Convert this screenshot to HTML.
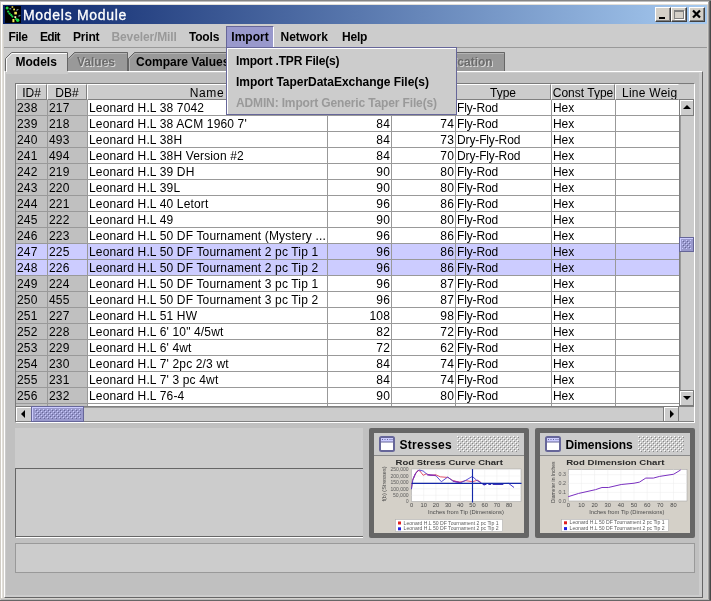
<!DOCTYPE html>
<html>
<head>
<meta charset="utf-8">
<title>Models Module</title>
<style>
html,body{margin:0;padding:0;}
body{width:711px;height:601px;overflow:hidden;background:#d4d2ce;position:relative;
 font-family:"Liberation Sans",sans-serif;font-size:12px;color:#000;}
div,span{position:absolute;box-sizing:border-box;white-space:nowrap;}
svg{position:absolute;overflow:visible;}
#root{left:0;top:0;width:711px;height:601px;will-change:transform;transform:translateZ(0);}
.b{font-weight:bold;}
/* window chrome */
#edge-top0{left:0;top:0;width:711px;height:1px;background:#858585;}
#edge-top1{left:0;top:1px;width:709px;height:1px;background:#bdbdbd;}
#edge-left{left:0;top:2px;width:1px;height:597px;background:#d0ccc4;}
#edge-white-t{left:1px;top:2px;width:707px;height:2px;background:#fff;}#edge-t4{left:2px;top:4px;width:706px;height:1px;background:#e2dfd8;}#edge-l2{left:2px;top:4px;width:1px;height:594px;background:#e2dfd8;}
#edge-white-l{left:1px;top:2px;width:1px;height:596px;background:#fff;}
#edge-r1{left:709px;top:1px;width:2px;height:600px;background:linear-gradient(to right,#6c6c6c 50%,#484848 50%);}
#edge-r0{left:708px;top:2px;width:1px;height:598px;background:#a4a4a4;}
#edge-b1{left:0;top:600px;width:711px;height:1px;background:#666666;}
#edge-b0{left:1px;top:599px;width:708px;height:1px;background:#b8b8b8;}
#title{left:3px;top:5px;width:704px;height:19px;background:linear-gradient(to right,#0a246a 0%,#a6caf0 100%);}
#title .txt{left:20px;top:2px;color:#fff;font-size:14px;line-height:16px;letter-spacing:0.7px;-webkit-text-stroke:0.3px #fff;}
.wb{top:2px;width:16px;height:15px;background:#d4d0c8;border:1px solid;border-color:#fff #404040 #404040 #fff;box-shadow:inset -1px -1px 0 #808080;}
#client{left:4px;top:24px;width:703px;height:574px;background:#cccccc;}
/* menu */
#menubar{left:4px;top:24px;width:703px;height:24px;background:#cccccc;border-bottom:1px solid #999;}
.mi{font-weight:bold;font-size:12px;line-height:14px;}
.dis{color:#999;}
#msel{left:226px;top:26px;width:48px;height:22px;background:#9999cc;border:1px solid #666699;border-right-color:#fff;}
/* tabs */
#tabarea{left:4px;top:48px;width:703px;height:23px;background:#cccccc;}
#tabcontent{left:4px;top:71px;width:699px;height:527px;background:#cccccc;border:1px solid;border-color:#fff #666 #666 #fff;}
#tabinner{left:6px;top:73px;width:693px;height:522px;background:#c0c0c0;}
.tabtxt{font-weight:bold;font-size:12px;line-height:14px;top:55px;}
.tdis{color:#6b6b6b;text-shadow:1px 1px 0 #dadada;}
/* table */
#sp{left:15px;top:83px;width:680px;height:340px;border:1px solid;border-color:#7a7a7a #fff #fff #7a7a7a;background:#cccccc;}
.hd{top:84px;height:16px;background:#cccccc;border:1px solid;border-color:#fff #808080 #808080 #fff;text-align:center;line-height:16px;font-size:12px;overflow:hidden;}
#tbl{left:16px;top:100px;width:664px;height:306px;background:#fff;overflow:hidden;}
.row{left:16px;width:664px;height:16px;background:#fff;}
.row.sel{background:#ccccff;}
.row.sel .g{background:#ccccff;}
.c{top:0;height:16px;line-height:16px;padding:0 2px 0 1px;letter-spacing:0.15px;border-right:1px solid #999;border-bottom:1px solid #999;overflow:hidden;}
.g{background:#c0c0c0;}
.r{text-align:right;padding-right:1px;}
/* scrollbars */
.sbtn{background:#cccccc;border:1px solid #7c7c7c;box-shadow:inset 1px 1px 0 #fff;}
.thumb{background:#9999cc;border:1px solid #666699;box-shadow:inset 1px 1px 0 #ccccff;}
/* lower */
#lower{left:15px;top:428px;width:348px;height:110px;background:#cccccc;}
#lowpanel{left:15px;top:468px;width:348px;height:70px;background:#cccccc;border-top:1px solid #666;border-left:1px solid #666;border-bottom:1px solid #fff;box-shadow:inset 0 -1px 0 #666;}
#status{left:15px;top:543px;width:680px;height:30px;background:#cccccc;border:1px solid #999;}
/* internal frames */
.ifr{background:#666666;}
.ifr .in{left:5px;top:5px;background:#cccccc;}
.ifr .tt{font-weight:bold;font-size:12px;line-height:14px;}
/* popup */
#popup{left:226px;top:47px;width:231px;height:68px;background:#cccccc;border:1px solid #666699;box-shadow:inset 1px 1px 0 #fff;}
.pi{left:9px;font-weight:bold;font-size:12px;line-height:14px;}
</style>
</head>
<body>
<div id="root">
<div id="edge-top0"></div><div id="edge-top1"></div><div id="edge-left"></div><div id="edge-white-t"></div><div id="edge-white-l"></div><div id="edge-t4"></div><div id="edge-l2"></div><div id="edge-r0"></div><div id="edge-r1"></div><div id="edge-b0"></div><div id="edge-b1"></div>
<div id="client"></div>
<div id="title">
<svg style="left:2px;top:1px" width="16" height="17" viewBox="0 0 16 17"><rect width="16" height="17" fill="#000"/>
<g fill="#20d848"><circle cx="2.1" cy="2.1" r="1.5"/><circle cx="3.2" cy="5.6" r="1.15"/><circle cx="4.6" cy="7.6" r="1.15"/><circle cx="6.2" cy="9.1" r="1.15"/><circle cx="7.4" cy="10.6" r="1.1"/><circle cx="11" cy="13" r="1.1"/><circle cx="12.7" cy="14.2" r="1.7"/></g>
<g fill="#f2ec58"><rect x="6.6" y="0.3" width="1.6" height="1.4"/><rect x="8.2" y="2.6" width="1.8" height="1.7"/><rect x="9.3" y="5.8" width="2.6" height="2.6"/><rect x="7.4" y="13" width="2" height="3.2"/></g>
<rect x="9.4" y="10.2" width="1.8" height="1.8" fill="#fbf8c0"/>
<g fill="#9cd0e0"><rect x="4.4" y="2.4" width="1.8" height="0.9"/><rect x="11.4" y="3.7" width="1.2" height="0.9"/><rect x="12.4" y="3" width="1" height="0.9"/><rect x="13.4" y="9.6" width="1.2" height="0.9"/><rect x="14.4" y="8.9" width="1" height="0.9"/></g>
</svg>
<span class="txt">Models Module</span>
<div class="wb" style="left:652px"><div style="left:3px;top:9px;width:6px;height:2px;background:#000"></div></div>
<div class="wb" style="left:668px"><div style="left:2px;top:2px;width:10px;height:9px;border:1px solid #808080;border-top-width:2px;box-shadow:1px 1px 0 #fff"></div></div>
<div class="wb" style="left:686px"><svg style="left:2px;top:2px" width="9" height="8" viewBox="0 0 9 8"><path d="M1 0.5 L8 7.5 M8 0.5 L1 7.5" stroke="#000" stroke-width="2.2"/></svg></div>
</div>
<div id="menubar"></div><div id="msel"></div>
<span class="mi" style="left:8.5px;top:30px;letter-spacing:-0.4px">File</span>
<span class="mi" style="left:40px;top:30px;letter-spacing:-0.7px">Edit</span>
<span class="mi" style="left:73px;top:30px;letter-spacing:-0.2px">Print</span>
<span class="mi dis" style="left:111.5px;top:30px;letter-spacing:-0.12px">Beveler/Mill</span>
<span class="mi" style="left:189px;top:30px;letter-spacing:-0.2px">Tools</span>
<span class="mi" style="left:231.3px;top:30px;letter-spacing:0px">Import</span>
<span class="mi" style="left:280.5px;top:30px;letter-spacing:0px">Network</span>
<span class="mi" style="left:342px;top:30px;letter-spacing:-0.2px">Help</span>
<div id="tabarea"></div><div id="tabcontent"></div><div id="tabinner"></div>
<svg style="left:0;top:48px" width="711" height="26" viewBox="0 48 711 26" shape-rendering="crispEdges">
<!-- unselected tabs -->
<polygon points="68,71 68,58.5 74.5,52 128,52 128,71" fill="#999999"/>
<polygon points="128,71 128,58.5 134.5,52 505,52 505,71" fill="#999999"/>
<g fill="none" stroke="#666666" stroke-width="1" shape-rendering="auto">
<path d="M68.5 58.5 L74.5 52.5 L127.5 52.5 L127.5 71"/>
<path d="M128.5 71 L128.5 58.5 L134.5 52.5 L504.5 52.5 L504.5 71"/>
</g>
<g fill="none" stroke="#b4b4b4" stroke-width="1" shape-rendering="auto">
<path d="M69.5 58.9 L74.9 53.5 L127 53.5"/>
<path d="M129.5 71 L129.5 58.9 L134.9 53.5 L504 53.5"/>
</g>
<!-- selected tab -->
<polygon points="5,74 5,58.5 11.5,52 68,52 68,74" fill="#cccccc"/>
<g fill="none" stroke-width="1" shape-rendering="auto">
<path d="M5.5 71 L5.5 58.5 L11.5 52.5 L67.5 52.5 L67.5 71" stroke="#666666"/>
<path d="M6.5 72 L6.5 58.9 L11.9 53.5 L67 53.5" stroke="#ffffff"/>
</g>
<rect x="4" y="71" width="1" height="1" fill="#fff"/>
</svg>
<span class="tabtxt" style="left:15.5px">Models</span>
<span class="tabtxt tdis" style="left:77px">Values</span>
<span class="tabtxt" style="left:136px">Compare Values</span>
<span class="tabtxt tdis" style="left:418px">Specification</span>
<div id="sp"></div>
<div class="hd" style="left:16px;width:31px;">ID#</div>
<div class="hd" style="left:47px;width:40px;">DB#</div>
<div class="hd" style="left:87px;width:240px;letter-spacing:0.6px;">Name</div>
<div class="hd" style="left:327px;width:64px;">Length</div>
<div class="hd" style="left:391px;width:64px;">Tip</div>
<div class="hd" style="left:455px;width:96px;">Type</div>
<div class="hd" style="left:551px;width:64px;">Const Type</div>
<div class="hd" style="left:615px;width:64px;text-align:left;padding-left:6px;letter-spacing:0.25px;border-right-color:#cccccc">Line Weig</div><div style="left:679px;top:84px;width:15px;height:16px;background:#cccccc;border-bottom:1px solid #808080"></div>
<div id="tbl"></div>
<div class="row" style="top:100px">
<span class="c g" style="left:0px;width:32px">238</span>
<span class="c g" style="left:32px;width:40px">217</span>
<span class="c" style="left:72px;width:240px">Leonard H.L 38 7042</span>
<span class="c r" style="left:312px;width:64px"></span>
<span class="c r" style="left:376px;width:64px"></span>
<span class="c" style="left:440px;width:96px;letter-spacing:-0.13px">Fly-Rod</span>
<span class="c" style="left:536px;width:64px;letter-spacing:-0.1px">Hex</span>
<span class="c" style="left:600px;width:64px"></span>
</div>
<div class="row" style="top:116px">
<span class="c g" style="left:0px;width:32px">239</span>
<span class="c g" style="left:32px;width:40px">218</span>
<span class="c" style="left:72px;width:240px">Leonard H.L 38 ACM 1960 7'</span>
<span class="c r" style="left:312px;width:64px">84</span>
<span class="c r" style="left:376px;width:64px">74</span>
<span class="c" style="left:440px;width:96px;letter-spacing:-0.13px">Fly-Rod</span>
<span class="c" style="left:536px;width:64px;letter-spacing:-0.1px">Hex</span>
<span class="c" style="left:600px;width:64px"></span>
</div>
<div class="row" style="top:132px">
<span class="c g" style="left:0px;width:32px">240</span>
<span class="c g" style="left:32px;width:40px">493</span>
<span class="c" style="left:72px;width:240px">Leonard H.L 38H</span>
<span class="c r" style="left:312px;width:64px">84</span>
<span class="c r" style="left:376px;width:64px">73</span>
<span class="c" style="left:440px;width:96px;letter-spacing:-0.13px">Dry-Fly-Rod</span>
<span class="c" style="left:536px;width:64px;letter-spacing:-0.1px">Hex</span>
<span class="c" style="left:600px;width:64px"></span>
</div>
<div class="row" style="top:148px">
<span class="c g" style="left:0px;width:32px">241</span>
<span class="c g" style="left:32px;width:40px">494</span>
<span class="c" style="left:72px;width:240px">Leonard H.L 38H Version #2</span>
<span class="c r" style="left:312px;width:64px">84</span>
<span class="c r" style="left:376px;width:64px">70</span>
<span class="c" style="left:440px;width:96px;letter-spacing:-0.13px">Dry-Fly-Rod</span>
<span class="c" style="left:536px;width:64px;letter-spacing:-0.1px">Hex</span>
<span class="c" style="left:600px;width:64px"></span>
</div>
<div class="row" style="top:164px">
<span class="c g" style="left:0px;width:32px">242</span>
<span class="c g" style="left:32px;width:40px">219</span>
<span class="c" style="left:72px;width:240px">Leonard H.L 39 DH</span>
<span class="c r" style="left:312px;width:64px">90</span>
<span class="c r" style="left:376px;width:64px">80</span>
<span class="c" style="left:440px;width:96px;letter-spacing:-0.13px">Fly-Rod</span>
<span class="c" style="left:536px;width:64px;letter-spacing:-0.1px">Hex</span>
<span class="c" style="left:600px;width:64px"></span>
</div>
<div class="row" style="top:180px">
<span class="c g" style="left:0px;width:32px">243</span>
<span class="c g" style="left:32px;width:40px">220</span>
<span class="c" style="left:72px;width:240px">Leonard H.L 39L</span>
<span class="c r" style="left:312px;width:64px">90</span>
<span class="c r" style="left:376px;width:64px">80</span>
<span class="c" style="left:440px;width:96px;letter-spacing:-0.13px">Fly-Rod</span>
<span class="c" style="left:536px;width:64px;letter-spacing:-0.1px">Hex</span>
<span class="c" style="left:600px;width:64px"></span>
</div>
<div class="row" style="top:196px">
<span class="c g" style="left:0px;width:32px">244</span>
<span class="c g" style="left:32px;width:40px">221</span>
<span class="c" style="left:72px;width:240px">Leonard H.L 40 Letort</span>
<span class="c r" style="left:312px;width:64px">96</span>
<span class="c r" style="left:376px;width:64px">86</span>
<span class="c" style="left:440px;width:96px;letter-spacing:-0.13px">Fly-Rod</span>
<span class="c" style="left:536px;width:64px;letter-spacing:-0.1px">Hex</span>
<span class="c" style="left:600px;width:64px"></span>
</div>
<div class="row" style="top:212px">
<span class="c g" style="left:0px;width:32px">245</span>
<span class="c g" style="left:32px;width:40px">222</span>
<span class="c" style="left:72px;width:240px">Leonard H.L 49</span>
<span class="c r" style="left:312px;width:64px">90</span>
<span class="c r" style="left:376px;width:64px">80</span>
<span class="c" style="left:440px;width:96px;letter-spacing:-0.13px">Fly-Rod</span>
<span class="c" style="left:536px;width:64px;letter-spacing:-0.1px">Hex</span>
<span class="c" style="left:600px;width:64px"></span>
</div>
<div class="row" style="top:228px">
<span class="c g" style="left:0px;width:32px">246</span>
<span class="c g" style="left:32px;width:40px">223</span>
<span class="c" style="left:72px;width:240px">Leonard H.L 50 DF Tournament (Mystery ...</span>
<span class="c r" style="left:312px;width:64px">96</span>
<span class="c r" style="left:376px;width:64px">86</span>
<span class="c" style="left:440px;width:96px;letter-spacing:-0.13px">Fly-Rod</span>
<span class="c" style="left:536px;width:64px;letter-spacing:-0.1px">Hex</span>
<span class="c" style="left:600px;width:64px"></span>
</div>
<div class="row sel" style="top:244px">
<span class="c g" style="left:0px;width:32px">247</span>
<span class="c g" style="left:32px;width:40px">225</span>
<span class="c" style="left:72px;width:240px">Leonard H.L 50 DF Tournament 2 pc Tip 1</span>
<span class="c r" style="left:312px;width:64px">96</span>
<span class="c r" style="left:376px;width:64px">86</span>
<span class="c" style="left:440px;width:96px;letter-spacing:-0.13px">Fly-Rod</span>
<span class="c" style="left:536px;width:64px;letter-spacing:-0.1px">Hex</span>
<span class="c" style="left:600px;width:64px"></span>
</div>
<div class="row sel" style="top:260px">
<span class="c g" style="left:0px;width:32px">248</span>
<span class="c g" style="left:32px;width:40px">226</span>
<span class="c" style="left:72px;width:240px">Leonard H.L 50 DF Tournament 2 pc Tip 2</span>
<span class="c r" style="left:312px;width:64px">96</span>
<span class="c r" style="left:376px;width:64px">86</span>
<span class="c" style="left:440px;width:96px;letter-spacing:-0.13px">Fly-Rod</span>
<span class="c" style="left:536px;width:64px;letter-spacing:-0.1px">Hex</span>
<span class="c" style="left:600px;width:64px"></span>
</div>
<div class="row" style="top:276px">
<span class="c g" style="left:0px;width:32px">249</span>
<span class="c g" style="left:32px;width:40px">224</span>
<span class="c" style="left:72px;width:240px">Leonard H.L 50 DF Tournament 3 pc Tip 1</span>
<span class="c r" style="left:312px;width:64px">96</span>
<span class="c r" style="left:376px;width:64px">87</span>
<span class="c" style="left:440px;width:96px;letter-spacing:-0.13px">Fly-Rod</span>
<span class="c" style="left:536px;width:64px;letter-spacing:-0.1px">Hex</span>
<span class="c" style="left:600px;width:64px"></span>
</div>
<div class="row" style="top:292px">
<span class="c g" style="left:0px;width:32px">250</span>
<span class="c g" style="left:32px;width:40px">455</span>
<span class="c" style="left:72px;width:240px">Leonard H.L 50 DF Tournament 3 pc Tip 2</span>
<span class="c r" style="left:312px;width:64px">96</span>
<span class="c r" style="left:376px;width:64px">87</span>
<span class="c" style="left:440px;width:96px;letter-spacing:-0.13px">Fly-Rod</span>
<span class="c" style="left:536px;width:64px;letter-spacing:-0.1px">Hex</span>
<span class="c" style="left:600px;width:64px"></span>
</div>
<div class="row" style="top:308px">
<span class="c g" style="left:0px;width:32px">251</span>
<span class="c g" style="left:32px;width:40px">227</span>
<span class="c" style="left:72px;width:240px">Leonard H.L 51 HW</span>
<span class="c r" style="left:312px;width:64px">108</span>
<span class="c r" style="left:376px;width:64px">98</span>
<span class="c" style="left:440px;width:96px;letter-spacing:-0.13px">Fly-Rod</span>
<span class="c" style="left:536px;width:64px;letter-spacing:-0.1px">Hex</span>
<span class="c" style="left:600px;width:64px"></span>
</div>
<div class="row" style="top:324px">
<span class="c g" style="left:0px;width:32px">252</span>
<span class="c g" style="left:32px;width:40px">228</span>
<span class="c" style="left:72px;width:240px">Leonard H.L 6' 10&quot; 4/5wt</span>
<span class="c r" style="left:312px;width:64px">82</span>
<span class="c r" style="left:376px;width:64px">72</span>
<span class="c" style="left:440px;width:96px;letter-spacing:-0.13px">Fly-Rod</span>
<span class="c" style="left:536px;width:64px;letter-spacing:-0.1px">Hex</span>
<span class="c" style="left:600px;width:64px"></span>
</div>
<div class="row" style="top:340px">
<span class="c g" style="left:0px;width:32px">253</span>
<span class="c g" style="left:32px;width:40px">229</span>
<span class="c" style="left:72px;width:240px">Leonard H.L 6' 4wt</span>
<span class="c r" style="left:312px;width:64px">72</span>
<span class="c r" style="left:376px;width:64px">62</span>
<span class="c" style="left:440px;width:96px;letter-spacing:-0.13px">Fly-Rod</span>
<span class="c" style="left:536px;width:64px;letter-spacing:-0.1px">Hex</span>
<span class="c" style="left:600px;width:64px"></span>
</div>
<div class="row" style="top:356px">
<span class="c g" style="left:0px;width:32px">254</span>
<span class="c g" style="left:32px;width:40px">230</span>
<span class="c" style="left:72px;width:240px">Leonard H.L 7' 2pc 2/3 wt</span>
<span class="c r" style="left:312px;width:64px">84</span>
<span class="c r" style="left:376px;width:64px">74</span>
<span class="c" style="left:440px;width:96px;letter-spacing:-0.13px">Fly-Rod</span>
<span class="c" style="left:536px;width:64px;letter-spacing:-0.1px">Hex</span>
<span class="c" style="left:600px;width:64px"></span>
</div>
<div class="row" style="top:372px">
<span class="c g" style="left:0px;width:32px">255</span>
<span class="c g" style="left:32px;width:40px">231</span>
<span class="c" style="left:72px;width:240px">Leonard H.L 7' 3 pc 4wt</span>
<span class="c r" style="left:312px;width:64px">84</span>
<span class="c r" style="left:376px;width:64px">74</span>
<span class="c" style="left:440px;width:96px;letter-spacing:-0.13px">Fly-Rod</span>
<span class="c" style="left:536px;width:64px;letter-spacing:-0.1px">Hex</span>
<span class="c" style="left:600px;width:64px"></span>
</div>
<div class="row" style="top:388px">
<span class="c g" style="left:0px;width:32px">256</span>
<span class="c g" style="left:32px;width:40px">232</span>
<span class="c" style="left:72px;width:240px">Leonard H.L 76-4</span>
<span class="c r" style="left:312px;width:64px">90</span>
<span class="c r" style="left:376px;width:64px">80</span>
<span class="c" style="left:440px;width:96px;letter-spacing:-0.13px">Fly-Rod</span>
<span class="c" style="left:536px;width:64px;letter-spacing:-0.1px">Hex</span>
<span class="c" style="left:600px;width:64px"></span>
</div>
<div class="row" style="top:404px;height:2px;overflow:hidden"><span class="c g" style="left:0px;width:32px"></span><span class="c g" style="left:32px;width:40px"></span><span class="c" style="left:72px;width:240px"></span><span class="c" style="left:312px;width:64px"></span><span class="c" style="left:376px;width:64px"></span><span class="c" style="left:440px;width:96px"></span><span class="c" style="left:536px;width:64px"></span><span class="c" style="left:600px;width:64px"></span></div>
<div style="left:679px;top:100px;width:15px;height:306px;background:#cccccc;border-left:1px solid #808080;box-shadow:inset 1px 0 0 #999"></div>
<div class="sbtn" style="left:679px;top:99px;width:15px;height:17px"><svg style="left:3px;top:5px" width="8" height="4" viewBox="0 0 8 4"><polygon points="0,4 8,4 4,0" fill="#000"/></svg></div>
<div class="sbtn" style="left:679px;top:390px;width:15px;height:16px"><svg style="left:3px;top:5px" width="8" height="4" viewBox="0 0 8 4"><polygon points="0,0 8,0 4,4" fill="#000"/></svg></div>
<div class="thumb" style="left:679px;top:237px;width:15px;height:15px"><svg style="left:2px;top:2px" width="9" height="9"><defs><pattern id="bpv" width="4" height="4" patternUnits="userSpaceOnUse"><rect width="4" height="4" fill="#9999cc"/><rect x="0" y="0" width="1" height="1" fill="#ccccff"/><rect x="1" y="1" width="1" height="1" fill="#666699"/><rect x="2" y="2" width="1" height="1" fill="#ccccff"/><rect x="3" y="3" width="1" height="1" fill="#666699"/></pattern></defs><rect width="9" height="9" fill="url(#bpv)"/></svg></div>
<div style="left:16px;top:406px;width:678px;height:16px;background:#cccccc;border-top:1px solid #808080;border-bottom:1px solid #808080;box-shadow:inset 0 1px 0 #999"></div>
<div class="sbtn" style="left:15px;top:406px;width:17px;height:16px"><svg style="left:5px;top:3px" width="4" height="8" viewBox="0 0 4 8"><polygon points="4,0 4,8 0,4" fill="#000"/></svg></div>
<div class="sbtn" style="left:663px;top:406px;width:16px;height:16px"><svg style="left:6px;top:3px" width="4" height="8" viewBox="0 0 4 8"><polygon points="0,0 0,8 4,4" fill="#000"/></svg></div>
<div class="thumb" style="left:31px;top:406px;width:53px;height:16px"><svg style="left:3px;top:2px" width="46" height="10"><defs><pattern id="bph" width="4" height="4" patternUnits="userSpaceOnUse"><rect width="4" height="4" fill="#9999cc"/><rect x="0" y="0" width="1" height="1" fill="#ccccff"/><rect x="1" y="1" width="1" height="1" fill="#666699"/><rect x="2" y="2" width="1" height="1" fill="#ccccff"/><rect x="3" y="3" width="1" height="1" fill="#666699"/></pattern></defs><rect width="46" height="10" fill="url(#bph)"/></svg></div>
<div style="left:678px;top:406px;width:16px;height:16px;background:#cccccc;border-left:1px solid #808080;border-top:1px solid #808080;border-bottom:1px solid #808080"></div>
<div id="lower"></div><div id="lowpanel"></div><div id="status"></div>
<div class="ifr" style="left:369px;top:428px;width:160px;height:110px;border-radius:2px">
<div class="in" style="width:150px;height:100px"></div>
<div style="left:5px;top:27px;width:150px;height:1px;background:#8a8a8a"></div>
<svg style="left:10px;top:8px" width="16" height="16" viewBox="0 0 16 16">
<rect x="1" y="1" width="14" height="14" rx="1.5" fill="#fff" stroke="#666699" stroke-width="2"/>
<rect x="2" y="2" width="12" height="4" fill="#ccccff"/>
<rect x="2" y="5.5" width="12" height="1" fill="#666699"/>
<g fill="#666699"><rect x="3" y="3" width="1" height="1"/><rect x="5.5" y="3" width="1" height="1"/><rect x="8" y="3" width="1" height="1"/><rect x="10.5" y="3" width="1" height="1"/><rect x="12.5" y="3" width="1" height="1"/></g>
</svg>
<span class="tt" style="left:30.5px;top:10px;letter-spacing:0.3px">Stresses</span>
<svg style="left:88px;top:8px" width="62" height="16"><defs><pattern id="bpf1" width="4" height="4" patternUnits="userSpaceOnUse"><rect width="4" height="4" fill="#cccccc"/><rect x="0" y="0" width="1" height="1" fill="#ffffff"/><rect x="1" y="1" width="1" height="1" fill="#888888"/><rect x="2" y="2" width="1" height="1" fill="#ffffff"/><rect x="3" y="3" width="1" height="1" fill="#888888"/></pattern></defs><rect width="62" height="16" fill="url(#bpf1)"/></svg>
<div style="left:5px;top:28px;width:150px;height:77px;background:#d4d0c8;overflow:hidden"><svg style="left:0;top:0" width="150" height="77" viewBox="374 456 150 77" font-family="Liberation Sans, sans-serif">
<text x="395.6" y="464.9" font-size="7.4" font-weight="bold" fill="#2a2a2a" textLength="107.4" lengthAdjust="spacingAndGlyphs">Rod Stress Curve Chart</text>
<rect x="411.5" y="469" width="109.5" height="32.5" fill="#fff" stroke="#a8a8a8" stroke-width="0.6"/>
<line x1="423.7" y1="469" x2="423.7" y2="501.5" stroke="#ececec" stroke-width="0.5"/>
<line x1="435.9" y1="469" x2="435.9" y2="501.5" stroke="#ececec" stroke-width="0.5"/>
<line x1="448.1" y1="469" x2="448.1" y2="501.5" stroke="#ececec" stroke-width="0.5"/>
<line x1="460.3" y1="469" x2="460.3" y2="501.5" stroke="#ececec" stroke-width="0.5"/>
<line x1="472.5" y1="469" x2="472.5" y2="501.5" stroke="#ececec" stroke-width="0.5"/>
<line x1="484.7" y1="469" x2="484.7" y2="501.5" stroke="#ececec" stroke-width="0.5"/>
<line x1="496.9" y1="469" x2="496.9" y2="501.5" stroke="#ececec" stroke-width="0.5"/>
<line x1="509.1" y1="469" x2="509.1" y2="501.5" stroke="#ececec" stroke-width="0.5"/>
<text x="408.6" y="471.3" font-size="4.8" fill="#5c5c5c" text-anchor="end" textLength="18.2" lengthAdjust="spacingAndGlyphs">250,000</text>
<line x1="411.5" y1="469.6" x2="521" y2="469.6" stroke="#ececec" stroke-width="0.5"/>
<text x="408.6" y="477.7" font-size="4.8" fill="#5c5c5c" text-anchor="end" textLength="18.2" lengthAdjust="spacingAndGlyphs">200,000</text>
<line x1="411.5" y1="476" x2="521" y2="476" stroke="#ececec" stroke-width="0.5"/>
<text x="408.6" y="484.2" font-size="4.8" fill="#5c5c5c" text-anchor="end" textLength="18.2" lengthAdjust="spacingAndGlyphs">150,000</text>
<line x1="411.5" y1="482.5" x2="521" y2="482.5" stroke="#ececec" stroke-width="0.5"/>
<text x="408.6" y="490.5" font-size="4.8" fill="#5c5c5c" text-anchor="end" textLength="18.2" lengthAdjust="spacingAndGlyphs">100,000</text>
<line x1="411.5" y1="488.8" x2="521" y2="488.8" stroke="#ececec" stroke-width="0.5"/>
<text x="408.6" y="497.0" font-size="4.8" fill="#5c5c5c" text-anchor="end" textLength="15.6" lengthAdjust="spacingAndGlyphs">50,000</text>
<line x1="411.5" y1="495.3" x2="521" y2="495.3" stroke="#ececec" stroke-width="0.5"/>
<text x="408.6" y="503.3" font-size="4.8" fill="#5c5c5c" text-anchor="end" textLength="2.6" lengthAdjust="spacingAndGlyphs">0</text>
<text x="411.5" y="507.2" font-size="5.2" fill="#4a4a4a" text-anchor="middle" textLength="3.2" lengthAdjust="spacingAndGlyphs">0</text>
<text x="423.7" y="507.2" font-size="5.2" fill="#4a4a4a" text-anchor="middle" textLength="6.4" lengthAdjust="spacingAndGlyphs">10</text>
<text x="435.9" y="507.2" font-size="5.2" fill="#4a4a4a" text-anchor="middle" textLength="6.4" lengthAdjust="spacingAndGlyphs">20</text>
<text x="448.1" y="507.2" font-size="5.2" fill="#4a4a4a" text-anchor="middle" textLength="6.4" lengthAdjust="spacingAndGlyphs">30</text>
<text x="460.3" y="507.2" font-size="5.2" fill="#4a4a4a" text-anchor="middle" textLength="6.4" lengthAdjust="spacingAndGlyphs">40</text>
<text x="472.5" y="507.2" font-size="5.2" fill="#4a4a4a" text-anchor="middle" textLength="6.4" lengthAdjust="spacingAndGlyphs">50</text>
<text x="484.7" y="507.2" font-size="5.2" fill="#4a4a4a" text-anchor="middle" textLength="6.4" lengthAdjust="spacingAndGlyphs">60</text>
<text x="496.9" y="507.2" font-size="5.2" fill="#4a4a4a" text-anchor="middle" textLength="6.4" lengthAdjust="spacingAndGlyphs">70</text>
<text x="509.1" y="507.2" font-size="5.2" fill="#4a4a4a" text-anchor="middle" textLength="6.4" lengthAdjust="spacingAndGlyphs">80</text>
<text x="428" y="514" font-size="6" fill="#4a4a4a" textLength="76" lengthAdjust="spacingAndGlyphs">Inches from Tip (Dimensions)</text>
<text transform="translate(386.2,501.5) rotate(-90)" font-size="5.6" fill="#4a4a4a" textLength="35" lengthAdjust="spacingAndGlyphs">f(b) (Stresses)</text>
<path d="M411.41 489.2 L412.48 480.65 L414.62 475.31 L417.82 470.39 L419.96 471.03 L423.17 475.31 L426.37 473.81 L430.65 475.31 L435.99 474.88 L440.27 476.8 L447.75 477.45 L453.09 480.65 L459.51 482.15 L465.92 480.65 L472.33 481.72 L477.68 480.22 L480.88 482.36" fill="none" stroke="#e0405c" stroke-width="0.9" stroke-linejoin="round"/>
<path d="M411.41 489.2 L412.91 479.58 L415.68 473.17 L418.89 469.96 L423.17 471.03 L427.44 474.67 L435.99 475.74 L441.34 481.72 L447.75 477.02 L453.09 481.29 L460.58 482.79 L465.92 480.22 L472.33 476.38 L476.61 480.22 L480.88 482.79 L484.09 485.14 L486.65 483.86" fill="none" stroke="#4a3ad0" stroke-width="0.9" stroke-linejoin="round"/>
<path d="M412.91 479.58 L415.68 473.17 L418.46 470.39" fill="none" stroke="#9030b0" stroke-width="1"/>
<path d="M427.44 474.88 L435.99 475.31" fill="none" stroke="#9030b0" stroke-width="1.2"/>
<path d="M453.09 481.08 L460.58 482.58" fill="none" stroke="#9030b0" stroke-width="1.2"/>
<path d="M483.02 484.07 L486.23 484.07" fill="none" stroke="#2a20b0" stroke-width="1.7"/>
<path d="M488.37 484.07 L491.14 484.07" fill="none" stroke="#2a20b0" stroke-width="1.7"/>
<path d="M492.64 484.07 L503.33 484.07" fill="none" stroke="#2a20b0" stroke-width="1.7"/>
<path d="M503.33 483.64 L508.67 483.22" fill="none" stroke="#60c8d8" stroke-width="0.8"/>
<path d="M508.67 483.43 L514.02 487.49" fill="none" stroke="#4a3ad0" stroke-width="1"/>
<line x1="411.5" y1="483.4" x2="521.5" y2="483.4" stroke="#1428a8" stroke-width="1.15"/>
<line x1="472.5" y1="469" x2="472.5" y2="502.5" stroke="#1428a8" stroke-width="1.15"/>
<rect x="395.5" y="519.5" width="107" height="12" fill="#fff" stroke="#b0b0b0" stroke-width="0.6"/>
<rect x="398" y="521.5" width="3" height="3" fill="#e02020"/><rect x="398" y="527.3" width="3" height="3" fill="#2020e0"/>
<text x="403.6" y="524.6" font-size="4.6" fill="#5c5c5c" textLength="95" lengthAdjust="spacingAndGlyphs">Leonard H.L 50 DF Tournament 2 pc Tip 1</text>
<text x="403.6" y="530.4" font-size="4.6" fill="#5c5c5c" textLength="95" lengthAdjust="spacingAndGlyphs">Leonard H.L 50 DF Tournament 2 pc Tip 2</text>
</svg></div>
</div>
<div class="ifr" style="left:535px;top:428px;width:160px;height:110px;border-radius:2px">
<div class="in" style="width:150px;height:100px"></div>
<div style="left:5px;top:27px;width:150px;height:1px;background:#8a8a8a"></div>
<svg style="left:10px;top:8px" width="16" height="16" viewBox="0 0 16 16">
<rect x="1" y="1" width="14" height="14" rx="1.5" fill="#fff" stroke="#666699" stroke-width="2"/>
<rect x="2" y="2" width="12" height="4" fill="#ccccff"/>
<rect x="2" y="5.5" width="12" height="1" fill="#666699"/>
<g fill="#666699"><rect x="3" y="3" width="1" height="1"/><rect x="5.5" y="3" width="1" height="1"/><rect x="8" y="3" width="1" height="1"/><rect x="10.5" y="3" width="1" height="1"/><rect x="12.5" y="3" width="1" height="1"/></g>
</svg>
<span class="tt" style="left:30.5px;top:10px;letter-spacing:-0.1px">Dimensions</span>
<svg style="left:103px;top:8px" width="46" height="16"><defs><pattern id="bpf2" width="4" height="4" patternUnits="userSpaceOnUse"><rect width="4" height="4" fill="#cccccc"/><rect x="0" y="0" width="1" height="1" fill="#ffffff"/><rect x="1" y="1" width="1" height="1" fill="#888888"/><rect x="2" y="2" width="1" height="1" fill="#ffffff"/><rect x="3" y="3" width="1" height="1" fill="#888888"/></pattern></defs><rect width="46" height="16" fill="url(#bpf2)"/></svg>
<div style="left:5px;top:28px;width:150px;height:77px;background:#d4d0c8;overflow:hidden"><svg style="left:0;top:0" width="150" height="77" viewBox="540 456 150 77" font-family="Liberation Sans, sans-serif">
<text x="566.2" y="464.9" font-size="7.4" font-weight="bold" fill="#2a2a2a" textLength="98.2" lengthAdjust="spacingAndGlyphs">Rod Dimension Chart</text>
<rect x="568.3" y="469.5" width="118.7" height="31.5" fill="#fff" stroke="#a8a8a8" stroke-width="0.6"/>
<line x1="581.4" y1="469.5" x2="581.4" y2="501" stroke="#ececec" stroke-width="0.5"/>
<line x1="594.6" y1="469.5" x2="594.6" y2="501" stroke="#ececec" stroke-width="0.5"/>
<line x1="607.8" y1="469.5" x2="607.8" y2="501" stroke="#ececec" stroke-width="0.5"/>
<line x1="620.9" y1="469.5" x2="620.9" y2="501" stroke="#ececec" stroke-width="0.5"/>
<line x1="634.0" y1="469.5" x2="634.0" y2="501" stroke="#ececec" stroke-width="0.5"/>
<line x1="647.2" y1="469.5" x2="647.2" y2="501" stroke="#ececec" stroke-width="0.5"/>
<line x1="660.3" y1="469.5" x2="660.3" y2="501" stroke="#ececec" stroke-width="0.5"/>
<line x1="673.5" y1="469.5" x2="673.5" y2="501" stroke="#ececec" stroke-width="0.5"/>
<text x="566" y="476.4" font-size="4.8" fill="#5c5c5c" text-anchor="end" textLength="7.4" lengthAdjust="spacingAndGlyphs">0.3</text>
<line x1="568.3" y1="474.7" x2="687" y2="474.7" stroke="#ececec" stroke-width="0.5"/>
<text x="566" y="485.09999999999997" font-size="4.8" fill="#5c5c5c" text-anchor="end" textLength="7.4" lengthAdjust="spacingAndGlyphs">0.2</text>
<line x1="568.3" y1="483.4" x2="687" y2="483.4" stroke="#ececec" stroke-width="0.5"/>
<text x="566" y="494.09999999999997" font-size="4.8" fill="#5c5c5c" text-anchor="end" textLength="7.4" lengthAdjust="spacingAndGlyphs">0.1</text>
<line x1="568.3" y1="492.4" x2="687" y2="492.4" stroke="#ececec" stroke-width="0.5"/>
<text x="566" y="502.7" font-size="4.8" fill="#5c5c5c" text-anchor="end" textLength="7.4" lengthAdjust="spacingAndGlyphs">0.0</text>
<text x="568.3" y="507.2" font-size="5.2" fill="#4a4a4a" text-anchor="middle" textLength="3.2" lengthAdjust="spacingAndGlyphs">0</text>
<text x="581.4" y="507.2" font-size="5.2" fill="#4a4a4a" text-anchor="middle" textLength="6.4" lengthAdjust="spacingAndGlyphs">10</text>
<text x="594.6" y="507.2" font-size="5.2" fill="#4a4a4a" text-anchor="middle" textLength="6.4" lengthAdjust="spacingAndGlyphs">20</text>
<text x="607.8" y="507.2" font-size="5.2" fill="#4a4a4a" text-anchor="middle" textLength="6.4" lengthAdjust="spacingAndGlyphs">30</text>
<text x="620.9" y="507.2" font-size="5.2" fill="#4a4a4a" text-anchor="middle" textLength="6.4" lengthAdjust="spacingAndGlyphs">40</text>
<text x="634.0" y="507.2" font-size="5.2" fill="#4a4a4a" text-anchor="middle" textLength="6.4" lengthAdjust="spacingAndGlyphs">50</text>
<text x="647.2" y="507.2" font-size="5.2" fill="#4a4a4a" text-anchor="middle" textLength="6.4" lengthAdjust="spacingAndGlyphs">60</text>
<text x="660.3" y="507.2" font-size="5.2" fill="#4a4a4a" text-anchor="middle" textLength="6.4" lengthAdjust="spacingAndGlyphs">70</text>
<text x="673.5" y="507.2" font-size="5.2" fill="#4a4a4a" text-anchor="middle" textLength="6.4" lengthAdjust="spacingAndGlyphs">80</text>
<text x="589.2" y="514" font-size="6" fill="#4a4a4a" textLength="75.2" lengthAdjust="spacingAndGlyphs">Inches from Tip (Dimensions)</text>
<text transform="translate(555.3,503) rotate(-90)" font-size="5.6" fill="#4a4a4a" textLength="41.5" lengthAdjust="spacingAndGlyphs">Diameter in Inches</text>
<path d="M568.22 496.68 L578.48 493.48 L595.58 489.63 L601.99 487.49 L608.41 487.49 L621.23 484.5 L634.06 483.22 L639.4 482.15 L645.81 478.09 L653.3 478.09 L659.71 476.38 L673.6 474.24 L678.95 471.03 L680.66 469.96" fill="none" stroke="#7a30c0" stroke-width="1" stroke-linejoin="round"/>
<rect x="561.5" y="519.3" width="107" height="12" fill="#fff" stroke="#b0b0b0" stroke-width="0.6"/>
<rect x="564" y="521.3" width="3" height="3" fill="#e02020"/><rect x="564" y="527.1" width="3" height="3" fill="#2020e0"/>
<text x="569.6" y="524.4" font-size="4.6" fill="#5c5c5c" textLength="95" lengthAdjust="spacingAndGlyphs">Leonard H.L 50 DF Tournament 2 pc Tip 1</text>
<text x="569.6" y="530.2" font-size="4.6" fill="#5c5c5c" textLength="95" lengthAdjust="spacingAndGlyphs">Leonard H.L 50 DF Tournament 2 pc Tip 2</text>
</svg></div>
</div>
<div id="popup">
<span class="pi" style="top:6px;letter-spacing:-0.17px">Import .TPR File(s)</span>
<span class="pi" style="top:27px;letter-spacing:-0.03px">Import TaperDataExchange File(s)</span>
<span class="pi dis" style="top:48px;letter-spacing:-0.14px">ADMIN: Import Generic Taper File(s)</span>
</div>
</div>
</body>
</html>
